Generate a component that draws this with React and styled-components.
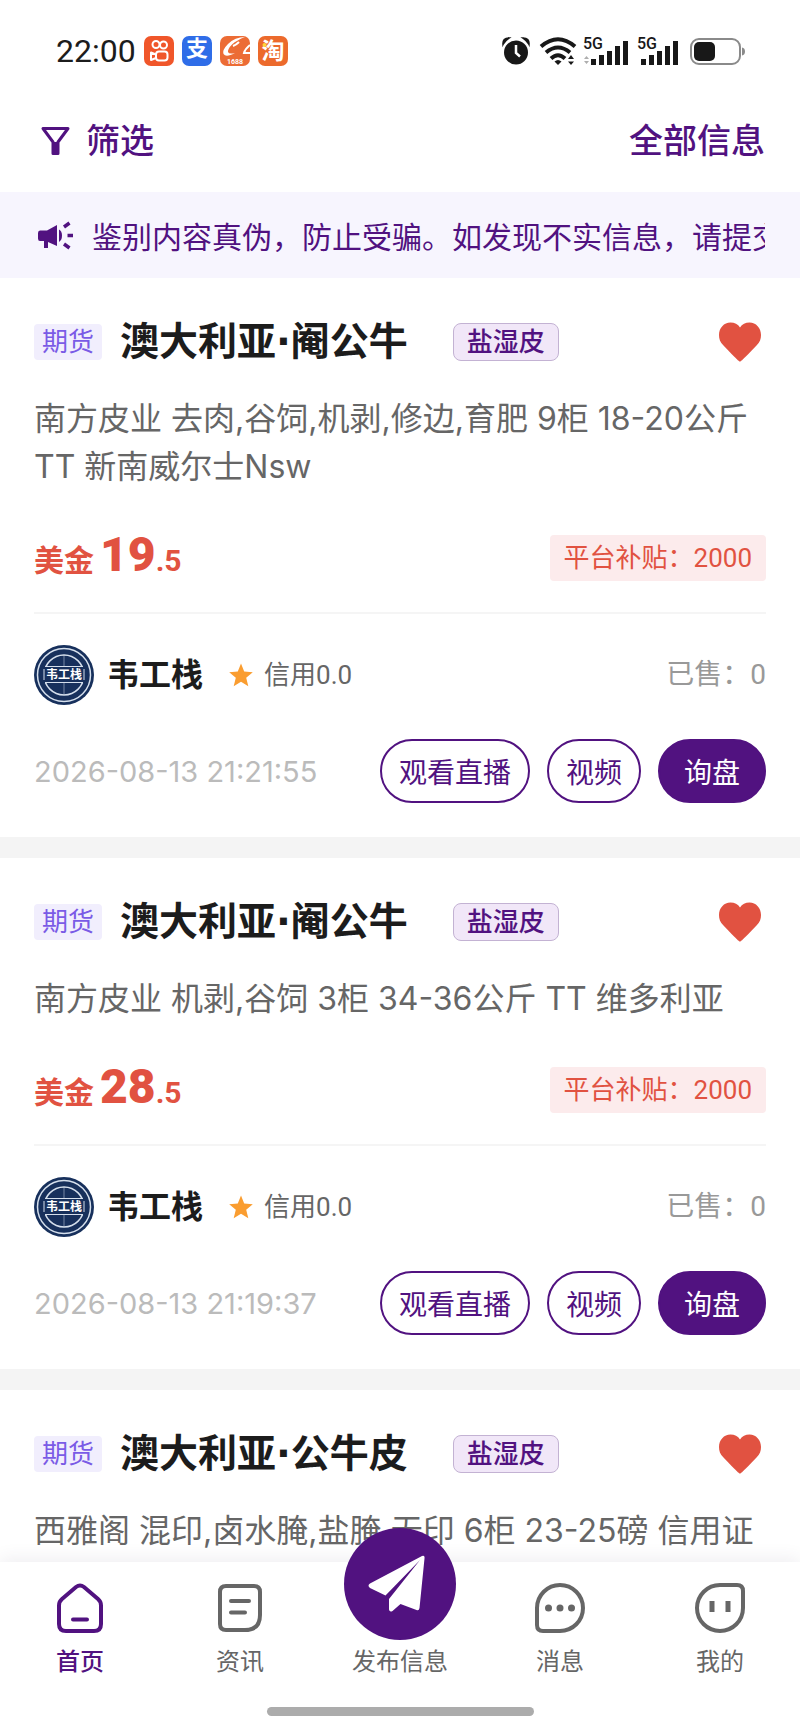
import React, { useState } from 'react'
import styled, { createGlobalStyle } from 'styled-components'

const cards = [
    {
        id: 1,
        title: '澳大利亚·阉公牛',
        kind: '盐湿皮',
        desc: '南方皮业 去肉,谷饲,机剥,修边,育肥 9柜 18-20公斤 TT 新南威尔士Nsw',
        price: ['19', '.5'],
        subsidy: 2000,
        time: '2026-08-13 21:21:55',
    },
    {
        id: 2,
        title: '澳大利亚·阉公牛',
        kind: '盐湿皮',
        desc: '南方皮业 机剥,谷饲 3柜 34-36公斤 TT 维多利亚',
        price: ['28', '.5'],
        subsidy: 2000,
        time: '2026-08-13 21:19:37',
    },
    {
        id: 3,
        title: '澳大利亚·公牛皮',
        kind: '盐湿皮',
        desc: '西雅阁 混印,卤水腌,盐腌,无印 6柜 23-25磅 信用证',
    },
]

function App() {
    const [tab, setTab] = useState('home')

    return (
        <Page>
            <GlobalStyle />
            <StatusBar />
            <Header>
                <FilterButton>
                    <FilterIcon />
                    筛选
                </FilterButton>
                <AllLink href="#all">全部信息</AllLink>
            </Header>
            <Notice>
                <HornIcon />
                <p>鉴别内容真伪，防止受骗。如发现不实信息，请提交</p>
            </Notice>
            <List>
                {cards.map((item) => <Card key={item.id} item={item} />)}
            </List>
            <TabBar tab={tab} setTab={setTab} />
        </Page>
    )
}

export default App

function Card({ item }) {
    const [liked, setLiked] = useState(true)

    return (
        <Article>
            <TitleRow>
                <Tag>期货</Tag>
                <h2>{item.title}</h2>
                <KindTag>{item.kind}</KindTag>
                <HeartButton aria-label="收藏" aria-pressed={liked} $liked={liked} onClick={() => setLiked(!liked)}>
                    <svg width="44" height="40" viewBox="0 0 44 40">
                        <path d="M22 39.500C21 39.500 19 37.500 5.500 23.500C2 20 1 17 1 13C1 6 6 0.500 12.500 0.500C16.500 0.500 20 2.200 22 5.500C24 2.200 27.500 0.500 31.500 0.500C38 0.500 43 6 43 13C43 17 42 20 38.500 23.500C25 37.500 23 39.500 22 39.500Z" />
                    </svg>
                </HeartButton>
            </TitleRow>
            <Desc>{item.desc}</Desc>
            {item.price && (
                <>
                    <PriceRow>
                        <Price>美金<strong>{item.price[0]}</strong>{item.price[1]}</Price>
                        <Subsidy>平台补贴：{item.subsidy}</Subsidy>
                    </PriceRow>
                    <SellerRow>
                        <Avatar />
                        <h3>韦工栈</h3>
                        <StarIcon />
                        <Credit>信用0.0</Credit>
                        <Sold>已售：0</Sold>
                    </SellerRow>
                    <ActionRow>
                        <time>{item.time}</time>
                        <PillButton>观看直播</PillButton>
                        <PillButton>视频</PillButton>
                        <PillButton $filled>询盘</PillButton>
                    </ActionRow>
                </>
            )}
        </Article>
    )
}

function TabBar({ tab, setTab }) {
    return (
        <Nav>
            <Tabs>
                <TabButton $active={tab === 'home'} onClick={() => setTab('home')}>
                    <svg width="54" height="54" viewBox="0 0 54 54">
                        <path d="M6 24.500Q6 20.500 9 18L23 6Q27 3 31 6L45 18Q48 20.500 48 24.500V43Q48 50 41 50H13Q6 50 6 43Z" />
                        <path d="M20 38.500H34" />
                    </svg>
                    首页
                </TabButton>
                <TabButton $active={tab === 'news'} onClick={() => setTab('news')}>
                    <svg width="54" height="54" viewBox="0 0 54 54">
                        <path d="M13 5H41Q47 5 47 11V34Q47 49 32 49H13Q7 49 7 43V11Q7 5 13 5Z" />
                        <path d="M18 20H36M18 31.500H32" />
                    </svg>
                    资讯
                </TabButton>
                <TabButton $active={tab === 'post'} onClick={() => setTab('post')}>
                    <PostBadge>
                        <svg width="112" height="112" viewBox="0 0 112 112">
                            <path d="M78 28Q81 27 80.500 30.500L75.500 80Q75 83 72.500 82L56.500 76L48.500 83Q45.500 84.500 45 81.500V71L76 32L41.500 67.500L26 60Q23 57.500 26 55.500Z" />
                        </svg>
                    </PostBadge>
                    发布信息
                </TabButton>
                <TabButton $active={tab === 'msg'} onClick={() => setTab('msg')}>
                    <svg width="54" height="54" viewBox="0 0 54 54">
                        <path d="M27 4A23 23 0 0 1 27 50H10Q4 50 4 44V27A23 23 0 0 1 27 4Z" />
                        <circle cx="15.500" cy="27" r="3.500" />
                        <circle cx="27" cy="27" r="3.500" />
                        <circle cx="38.500" cy="27" r="3.500" />
                    </svg>
                    消息
                </TabButton>
                <TabButton $active={tab === 'me'} onClick={() => setTab('me')}>
                    <svg width="54" height="54" viewBox="0 0 54 54">
                        <path d="M27 4H44Q50 4 50 10V27A23 23 0 1 1 27 4Z" />
                        <path className="eyes" d="M19 20V31M35 20V31" />
                    </svg>
                    我的
                </TabButton>
            </Tabs>
            <HomeBar />
        </Nav>
    )
}

function StatusBar() {
    return (
        <Status>
            <Clock>22:00</Clock>
            <AppIcons>
                <svg width="30" height="30" viewBox="0 0 30 30">
                    <rect width="30" height="30" rx="7" fill="#f0562a" />
                    <g fill="none" stroke="#fff" strokeWidth="2">
                        <circle cx="12" cy="8.500" r="3.500" />
                        <circle cx="19.500" cy="9" r="3.500" />
                        <rect x="12" y="15.500" width="11.500" height="9" rx="3" />
                        <path d="M12 18.500L7 16.500V24L12 22" strokeLinejoin="round" />
                    </g>
                </svg>
                <svg width="30" height="30" viewBox="0 0 30 30">
                    <rect width="30" height="30" rx="7" fill="#2f6de8" />
                    <text x="15" y="20" textAnchor="middle" fontSize="22" fontWeight="700">支</text>
                </svg>
                <svg width="30" height="30" viewBox="0 0 30 30">
                    <rect width="30" height="30" rx="7" fill="#ec6c35" />
                    <path d="M25 1Q15 1 8 8Q2 14 3.500 18Q6 22 15 17Q9 18.500 8 16Q7.500 13 12 8.500Q17 4 25 1Z" fill="#fff" />
                    <path d="M13 10Q16 9 19 6M30 9Q25 13 24 17H30" fill="none" stroke="#fff" strokeWidth="2" />
                    <text x="15" y="28" textAnchor="middle" fontSize="7" fontWeight="700">1688</text>
                </svg>
                <svg width="30" height="30" viewBox="0 0 30 30">
                    <rect width="30" height="30" rx="7" fill="#ec6a2c" />
                    <text x="15" y="23" textAnchor="middle" fontSize="23" fontWeight="700">淘</text>
                    <circle cx="6.500" cy="9" r="2" fill="#ffd83a" />
                </svg>
            </AppIcons>
            <svg width="244" height="30" viewBox="0 0 244 30" fill="#181818">
                {/* alarm */}
                <circle cx="15" cy="16.500" r="12" />
                <path d="M2 8.500Q1.500 2 8 2Q4 4.500 2 8.500ZM28 8.500Q28.500 2 22 2Q26 4.500 28 8.500Z" stroke="#181818" strokeWidth="1.500" />
                <path d="M15 9V17L19 20.500" fill="none" stroke="#fff" strokeWidth="2.500" />
                {/* wifi */}
                <g fill="none" stroke="#181818" strokeWidth="4">
                    <path d="M40 10.500Q57 -4 74 10.500" />
                    <path d="M45 16.500Q57 6.500 69 16.500" />
                    <path d="M50 22.500Q57 16 64 22.500" />
                </g>
                <path d="M53.500 25.500Q57 22.500 60.500 25.500L57 29Z" />
                <path d="M67 23L70 19L73 23ZM67 25.500L70 29L73 25.500Z" />
                {/* mobile signal, twice */}
                <text x="82" y="13" fontSize="16" fontWeight="500">5G</text>
                <path d="M83 23L85.500 20L88 23ZM83 25L85.500 28L88 25Z" opacity="0.35" />
                <path d="M90 23h5v6h-5ZM98 19h5v10h-5ZM106 15h5v14h-5ZM114 10h5v19h-5ZM122 5h5v24h-5Z" />
                <text x="136" y="13" fontSize="16" fontWeight="500">5G</text>
                <path d="M140 23h5v6h-5ZM148 19h5v10h-5ZM156 15h5v14h-5ZM164 10h5v19h-5ZM172 5h5v24h-5Z" />
                {/* battery */}
                <rect x="190" y="3" width="49" height="25" rx="8" fill="none" stroke="#8a8a8a" strokeWidth="2" />
                <rect x="193" y="6" width="21" height="19" rx="5" />
                <path d="M241 11.500Q244 12 244 15.500T241 19.500Z" fill="#8a8a8a" />
            </svg>
        </Status>
    )
}

function FilterIcon() {
    return (
        <svg width="32" height="32" viewBox="0 0 32 32" fill="none" stroke="#511280" strokeWidth="3" strokeLinejoin="round">
            <path d="M3 3.500H28L18 17V28.500H13V17Z" />
            <path d="M15.500 17V29" strokeWidth="5" />
        </svg>
    )
}

function HornIcon() {
    return (
        <svg width="38" height="30" viewBox="0 0 38 30" fill="#511280">
            <path d="M3 10.500H10L20 5V26L11 22V28H7V21H3Q1 21 1 18.500V13Q1 10.500 3 10.500Z" />
            <path d="M22 9.500Q25 11 25 15.500T22 22Z" />
            <path d="M27 7L32.500 3M30.500 15.500H36M27 24L32.500 28" stroke="#511280" strokeWidth="3.500" />
        </svg>
    )
}

function StarIcon() {
    return (
        <svg width="24" height="24" viewBox="0 0 24 24" fill="#fa9d30">
            <path d="M12 0.500L15.200 8.500L23.800 9.200L17.200 14.800L19.300 23.200L12 18.700L4.700 23.200L6.800 14.800L0.200 9.200L8.800 8.500Z" />
        </svg>
    )
}

function Avatar() {
    return (
        <svg width="60" height="60" viewBox="0 0 60 60">
            <circle cx="30" cy="30" r="30" fill="#17305c" />
            <g fill="none" stroke="#d5dfec">
                <circle cx="30" cy="30" r="26.500" strokeWidth="1.500" />
                <circle cx="30" cy="30" r="20" strokeWidth="1.500" />
                <path d="M30 10V50" strokeWidth="0.500" />
            </g>
            <rect x="9" y="21" width="42" height="17" fill="#17305c" />
            <path d="M11 21.500H49M11 37.500H49M10 24V35M50 24V35" stroke="#d5dfec" />
            <text x="30" y="34" textAnchor="middle" fontSize="12" fontWeight="700" fill="#fff">韦工栈</text>
        </svg>
    )
}

const GlobalStyle = createGlobalStyle`
    * {
        box-sizing: border-box;
        margin: 0;
    }
    body {
        background: #fff;
        color: #1c1c1c;
        font-family: Roboto, "Noto Sans CJK SC", sans-serif;
    }
    button {
        padding: 0;
        border: none;
        background: none;
        font-family: inherit;
        cursor: pointer;
    }
    svg {
        flex-shrink: 0;
    }
`

const Page = styled.div`
    display: flex;
    flex-direction: column;
    height: 100vh;
    overflow: hidden;
`

const Status = styled.div`
    display: flex;
    align-items: center;
    height: 102px;
    padding: 0 55px 0 56px;
`

const Clock = styled.span`
    font-size: 32px;
`

const AppIcons = styled.div`
    display: flex;
    flex: 1;
    gap: 8px;
    margin-left: 8px;
    text {
        fill: #fff;
    }
`

const Header = styled.header`
    display: flex;
    align-items: center;
    justify-content: space-between;
    height: 90px;
    padding: 0 35px 12px 40px;
`

const FilterButton = styled.button`
    display: flex;
    align-items: center;
    gap: 14px;
    color: #511280;
    font-size: 34px;
    font-weight: 500;
    line-height: 48px;
`

const AllLink = styled.a`
    color: #511280;
    font-size: 34px;
    font-weight: 500;
    line-height: 48px;
    text-decoration: none;
`

const Notice = styled.div`
    display: flex;
    align-items: center;
    gap: 17px;
    height: 86px;
    padding: 0 35px 0 37px;
    background: #f7f5fe;
    color: #511280;
    p {
        overflow: hidden;
        white-space: nowrap;
        font-size: 30px;
    }
`

const List = styled.main`
    flex: 1;
    min-height: 0;
    overflow: hidden;
    background: #f4f4f4;
`

const Article = styled.article`
    margin-bottom: 21px;
    padding: 41px 34px 34px;
    background: #fff;
`

const TitleRow = styled.div`
    display: flex;
    align-items: center;
    height: 46px;
    margin-bottom: 30px;
    h2 {
        margin: 0 45px 0 18px;
        font-family: "DejaVu Sans", "Noto Sans CJK SC", sans-serif;
        font-size: 39px;
        font-weight: 700;
        line-height: 46px;
    }
`

const Tag = styled.span`
    padding: 0 8px;
    border-radius: 4px;
    background: #f1eefd;
    color: #7a5be6;
    font-size: 26px;
    line-height: 36px;
`

const KindTag = styled.span`
    padding: 0 13px;
    border: 1px solid #c3b2d3;
    border-radius: 8px;
    background: #f1e7f8;
    color: #511280;
    font-size: 26px;
    font-weight: 500;
    line-height: 36px;
`

const HeartButton = styled.button`
    display: flex;
    margin-left: auto;
    margin-right: 4px;
    svg {
        fill: ${(props) => (props.$liked ? '#e15241' : '#ddd')};
    }
`

const Desc = styled.p`
    color: #666;
    font-family: Inter, "Noto Sans CJK SC", sans-serif;
    font-size: 32px;
    line-height: 48px;
`

const PriceRow = styled.div`
    display: flex;
    align-items: center;
    justify-content: space-between;
    height: 46px;
    margin-top: 44px;
`

const Price = styled.p`
    color: #e15241;
    font-size: 30px;
    font-weight: 700;
    line-height: 46px;
    strong {
        margin-left: 6px;
        font-size: 48px;
    }
`

const Subsidy = styled.span`
    padding: 0 14px;
    border-radius: 4px;
    background: #fcebec;
    color: #e15241;
    font-size: 26px;
    line-height: 46px;
`

const SellerRow = styled.div`
    display: flex;
    align-items: center;
    margin-top: 31px;
    padding-top: 31px;
    border-top: 2px solid #f5f5f5;
    h3 {
        margin: 0 26px 0 13px;
        font-size: 32px;
        font-weight: 700;
        line-height: 48px;
    }
`

const Credit = styled.span`
    margin-left: 11px;
    color: #666;
    font-size: 26px;
    line-height: 36px;
`

const Sold = styled.span`
    margin-left: auto;
    color: #999;
    font-size: 28px;
    line-height: 36px;
`

const ActionRow = styled.div`
    display: flex;
    align-items: center;
    gap: 17px;
    margin-top: 34px;
    time {
        margin-right: auto;
        color: #bbb;
        font-family: Inter, sans-serif;
        font-size: 29px;
    }
`

const PillButton = styled.button`
    height: 64px;
    padding: 0 ${(props) => (props.$filled ? 24 : 17)}px;
    border: 2px solid #511280;
    border-radius: 32px;
    background: ${(props) => (props.$filled ? '#511280' : '#fff')};
    color: ${(props) => (props.$filled ? '#fff' : '#511280')};
    font-size: 28px;
`

const Nav = styled.nav`
    position: relative;
    height: 170px;
    background: #fff;
    box-shadow: 0 -4px 16px rgba(60, 50, 90, 0.08);
`

const Tabs = styled.div`
    display: grid;
    grid-template-columns: repeat(5, 1fr);
    height: 145px;
`

const TabButton = styled.button`
    position: relative;
    display: flex;
    flex-direction: column;
    align-items: center;
    justify-content: flex-end;
    gap: 10px;
    padding-bottom: 28px;
    color: ${(props) => (props.$active ? '#511280' : '#666')};
    font-size: 24px;
    font-weight: ${(props) => (props.$active ? 500 : 400)};
    line-height: 34px;
    > svg {
        fill: none;
        stroke: currentColor;
        stroke-width: 4;
        stroke-linecap: round;
    }
    circle {
        fill: currentColor;
        stroke: none;
    }
    .eyes {
        stroke-width: 5;
        stroke-linecap: butt;
    }
`

const PostBadge = styled.span`
    position: absolute;
    top: -34px;
    left: 50%;
    width: 112px;
    height: 112px;
    margin-left: -56px;
    border-radius: 50%;
    background: #511280;
    svg {
        fill: #fff;
    }
`

const HomeBar = styled.div`
    width: 267px;
    height: 9px;
    margin: 0 auto;
    border-radius: 5px;
    background: #acacac;
`
